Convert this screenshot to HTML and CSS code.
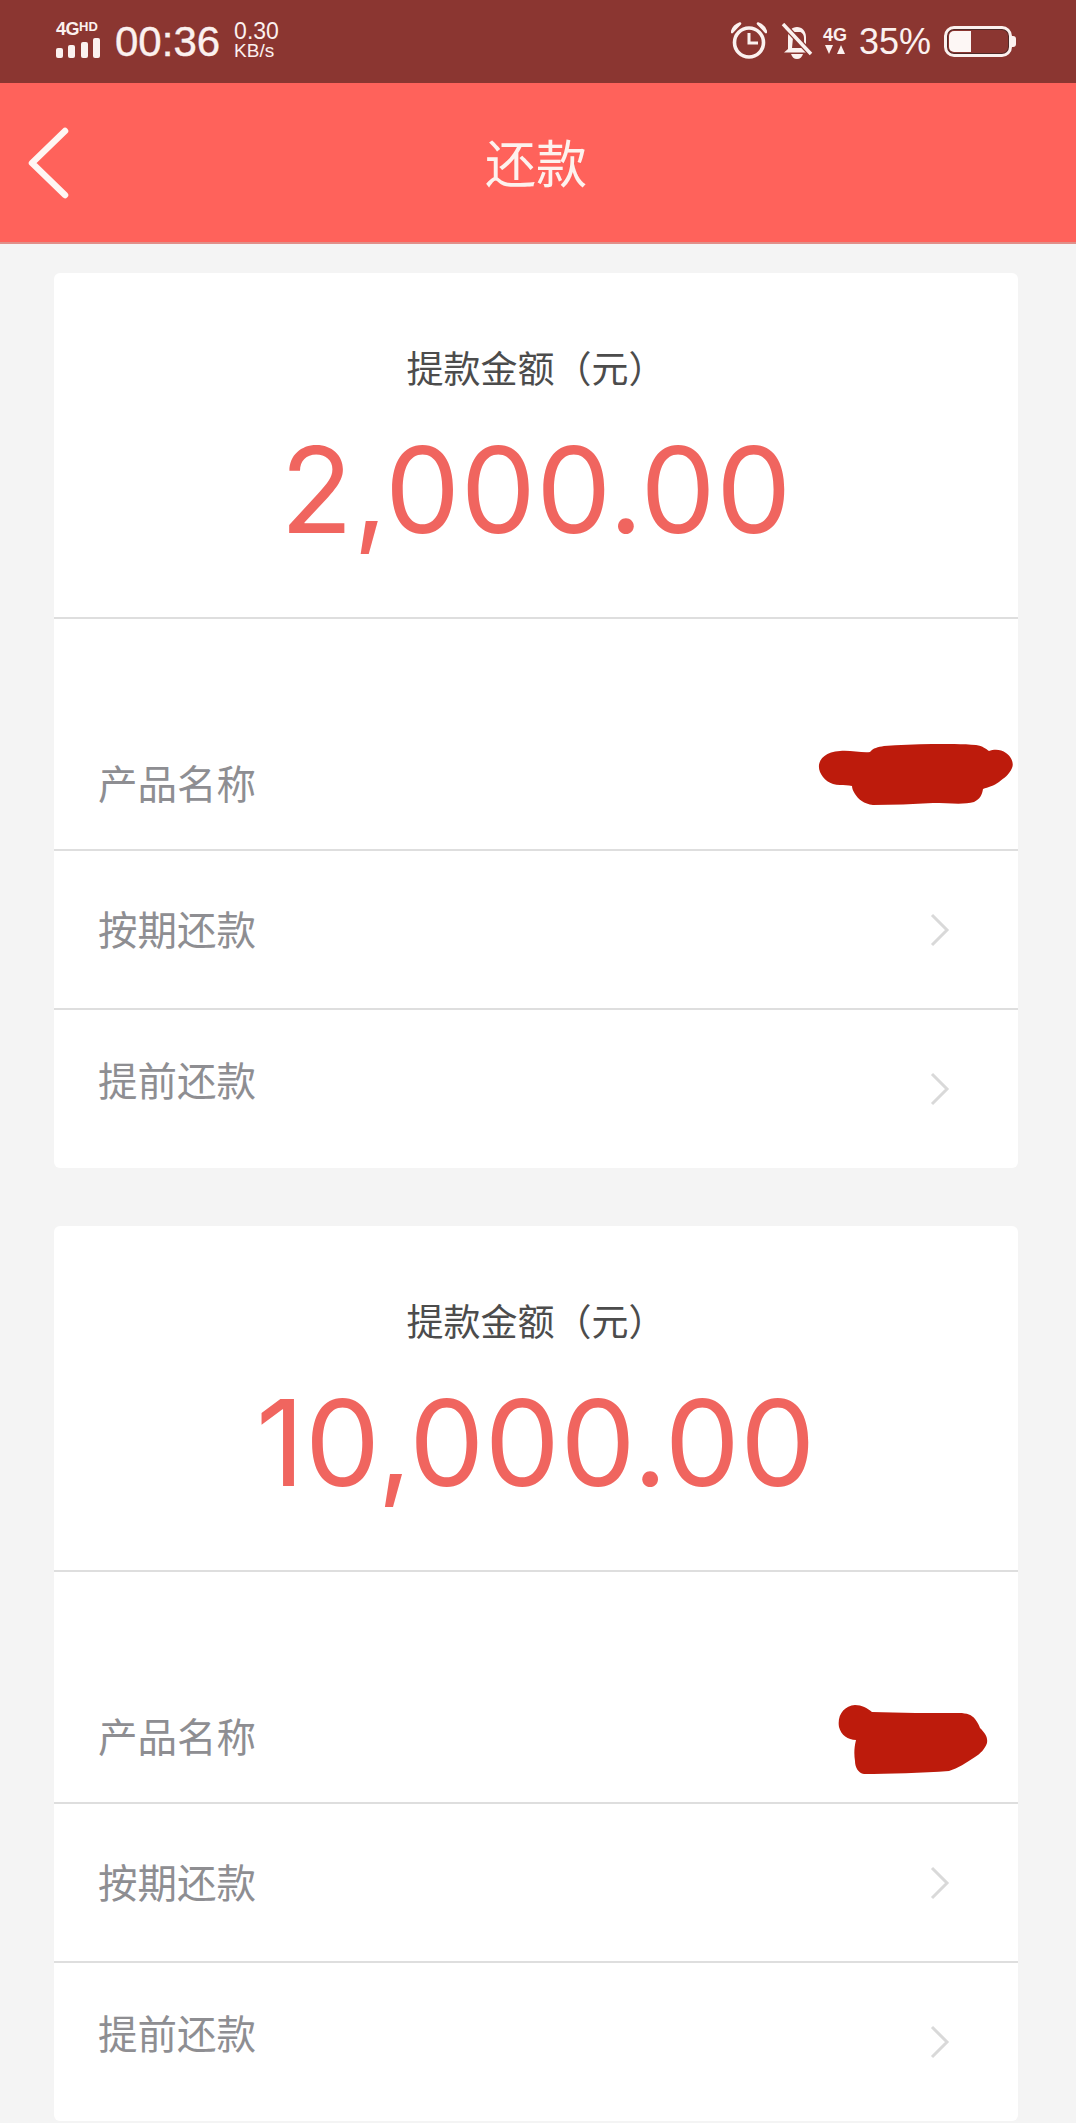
FILE: index.html
```html
<!DOCTYPE html>
<html lang="zh-CN">
  <head>
    <meta charset="UTF-8" />
    <meta name="viewport" content="width=device-width, initial-scale=1.0" />
    <title>还款</title>
    <link rel="stylesheet" href="styles.css">
  </head>
  <body>
    <div class="statusbar">
      <div class="status-left">
        <div class="signal">
          <div class="net"><span class="net-4g">4G</span><span class="net-hd">HD</span></div>
          <div class="bars">
            <i class="bar b1"></i>
            <i class="bar b2"></i>
            <i class="bar b3"></i>
            <i class="bar b4"></i>
          </div>
        </div>
        <span class="clock">00:36</span>
        <div class="speed">
          <span class="speed-num">0.30</span>
          <span class="speed-unit">KB/s</span>
        </div>
      </div>
      <div class="status-right">
        <svg class="ico-alarm" width="36" height="37" viewBox="0 0 36 37" fill="none" stroke="#fbf1ef">
          <circle cx="18" cy="20.5" r="14.5" stroke-width="3.6" />
          <path d="M18 11v10h9" stroke-width="3" />
          <path d="M1 10c1-4 4-7 8-8.500L1 10z" stroke-width="2.6" stroke-linejoin="round" />
          <path d="M35 10c-1-4-4-7-8-8.500L35 10z" stroke-width="2.6" stroke-linejoin="round" />
        </svg>
        <svg class="ico-bell" width="32" height="36" viewBox="0 0 32 36" fill="none">
          <path d="M7 26V14C7 8 11 4 16 4s9 4 9 10v12l4 3.500H3z" fill="#fbf1ef" />
          <path d="M12.500 9h7c2 1 3.500 3 3.500 6v10H11z" fill="#8b3631" />
          <path d="M10 31c1 3 3 5 6 5s5-2 6-5z" fill="#fbf1ef" />
          <path d="M2 1l28 30" stroke="#8b3631" stroke-width="6" />
          <path d="M2 1l28 30" stroke="#fbf1ef" stroke-width="3.500" />
        </svg>
        <div class="data">
          <span class="data-4g">4G</span>
          <svg width="20" height="11" viewBox="0 0 20 11" fill="#fbf1ef">
            <path d="M0 1h8L4 10z" />
            <path d="M12 10h8L16 1z" />
          </svg>
        </div>
        <span class="batt-pct">35%</span>
        <div class="battery">
          <div class="batt-body"><div class="batt-fill"></div></div>
          <i class="batt-tip"></i>
        </div>
      </div>
    </div>

    <div class="topbar">
      <svg class="back" width="44" height="72" viewBox="0 0 44 72" fill="none">
        <path d="M38 4L5 36l33 32" stroke="#fff6f3" stroke-width="6.500" stroke-linecap="round" stroke-linejoin="round" />
      </svg>
      <h1>还款</h1>
    </div>

    <div class="list">
      <div class="card">
        <div class="card-head">
          <p class="amount-label">提款金额（元）</p>
          <p class="amount">2,000.00</p>
        </div>
        <div class="row row-name">
          <span class="row-label">产品名称</span>
          <svg class="scribble scribble-a" width="195" height="62" viewBox="0 0 195 62">
            <path d="M22 7C32 6 44 9 52 8 55 4 60 3 66 2 95 0 135-1 158 1 165 2 168 5 171 7 176 5 183 5 188 9 194 13 196 20 194 24 191 31 186 34 181 38 176 42 170 43 165 45 164 51 162 55 156 58 146 61 130 59 115 59 95 60 75 61 55 61 46 60 40 55 37 50 35 47 34 44 34 42 30 41 26 41 22 41 12 41 5 35 2 28-2 18 5 8 22 7Z" />
          </svg>
        </div>
        <div class="row">
          <span class="row-label">按期还款</span>
          <svg class="chev" width="20" height="34" viewBox="0 0 20 34" fill="none">
            <path d="M2 2l15 15L2 32" />
          </svg>
        </div>
        <div class="row row-last">
          <span class="row-label">提前还款</span>
          <svg class="chev" width="20" height="34" viewBox="0 0 20 34" fill="none">
            <path d="M2 2l15 15L2 32" />
          </svg>
        </div>
      </div>

      <div class="card">
        <div class="card-head">
          <p class="amount-label">提款金额（元）</p>
          <p class="amount">10,000.00</p>
        </div>
        <div class="row row-name">
          <span class="row-label">产品名称</span>
          <svg class="scribble scribble-b" width="150" height="71" viewBox="0 0 150 71">
            <path d="M17 0C24 0 29 3 34 7 60 8 95 8 121 8 129 8 134 10 137 14 140 18 141 20 142 23 147 28 150 32 149 38 147 44 142 49 137 52 128 58 120 63 111 66 85 68 50 69 26 69 20 68 17 62 17 56 16 50 16 43 18 35 10 35 3 30 1 22-1 10 6 1 17 0Z" />
          </svg>
        </div>
        <div class="row">
          <span class="row-label">按期还款</span>
          <svg class="chev" width="20" height="34" viewBox="0 0 20 34" fill="none">
            <path d="M2 2l15 15L2 32" />
          </svg>
        </div>
        <div class="row row-last">
          <span class="row-label">提前还款</span>
          <svg class="chev" width="20" height="34" viewBox="0 0 20 34" fill="none">
            <path d="M2 2l15 15L2 32" />
          </svg>
        </div>
      </div>
    </div>
  </body>
</html>
```

FILE: styles.css
```css
* {
  box-sizing: border-box;
}

html,
body {
  height: 100%;
}

body {
  margin: 0;
  background-color: #f4f4f4;
  font-family: "Liberation Sans", "Noto Sans CJK SC", sans-serif;
  overflow: hidden;
}

p,
h1 {
  margin: 0;
  font-weight: normal;
}

/* status bar */
.statusbar {
  height: 83px;
  background-color: #8b3631;
  color: #fbf1ef;
  display: flex;
  justify-content: space-between;
  align-items: center;
  padding: 0 60px 0 56px;
}

.status-left,
.status-right {
  display: flex;
  align-items: center;
}

.signal {
  width: 44px;
  margin-right: 15px;
  margin-top: -5px;
}

.net {
  display: flex;
  align-items: flex-start;
  height: 16px;
  font-weight: bold;
  line-height: 16px;
}

.net-4g {
  font-size: 18px;
  letter-spacing: -0.5px;
}

.net-hd {
  font-size: 13px;
  line-height: 12px;
}

.bars {
  display: flex;
  justify-content: space-between;
  align-items: flex-end;
  height: 20px;
  margin-top: 1px;
}

.bar {
  width: 7px;
  background-color: #fbf1ef;
  border-radius: 2px;
}

.b1 { height: 10px; }
.b2 { height: 13px; }
.b3 { height: 16px; }
.b4 { height: 20px; }

.clock {
  font-size: 42px;
  line-height: 48px;
  -webkit-text-stroke: 0.4px #fbf1ef;
}

.speed {
  display: flex;
  flex-direction: column;
  margin-left: 14px;
  margin-top: -3px;
}

.speed-num {
  font-size: 23px;
  line-height: 21px;
}

.speed-unit {
  font-size: 19px;
  line-height: 18px;
}

.ico-alarm {
  margin-right: 14px;
  margin-top: -3px;
}

.ico-bell {
  margin-right: 10px;
  margin-top: -1px;
}

.data {
  width: 24px;
  display: flex;
  flex-direction: column;
  align-items: center;
  margin-right: 12px;
  margin-top: -2px;
}

.data-4g {
  font-size: 18px;
  line-height: 17px;
  font-weight: bold;
}

.batt-pct {
  font-size: 36px;
  line-height: 42px;
  margin-right: 13px;
}

.battery {
  display: flex;
  align-items: center;
}

.batt-body {
  width: 68px;
  height: 31px;
  border: 3px solid #fbf1ef;
  border-radius: 10px;
  padding: 2px;
  box-shadow: inset 0 0 0 1px #4d2a28;
}

.batt-fill {
  width: 22px;
  height: 100%;
  background-color: #fdf7f5;
  border-radius: 5px 0 0 5px;
}

.batt-tip {
  width: 4px;
  height: 11px;
  background-color: #fbf1ef;
  border-radius: 0 3px 3px 0;
}

/* title bar */
.topbar {
  position: relative;
  height: 161px;
  background-color: #ff625b;
  border-bottom: 2px solid #e0908a;
  display: flex;
  justify-content: center;
  align-items: center;
}

.topbar h1 {
  font-size: 51px;
  color: #fdf2ee;
  line-height: 60px;
  margin-top: 6px;
  margin-right: 4px;
}

.back {
  position: absolute;
  left: 27px;
  top: 44px;
}

/* cards */
.list {
  display: flex;
  flex-direction: column;
  gap: 58px;
  padding: 29px 58px 0 54px;
}

.card {
  background-color: #fff;
  border-radius: 6px;
  height: 895px;
  display: flex;
  flex-direction: column;
}

.card-head {
  height: 346px;
  border-bottom: 2px solid #dedede;
  text-align: center;
  padding-top: 73px;
}

.amount-label {
  font-size: 37px;
  line-height: 50px;
  color: #4c4c4c;
  text-spacing-trim: space-all;
}

.amount {
  margin-top: 24px;
  font-family: Inter, "Liberation Sans", sans-serif;
  font-size: 119px;
  line-height: 140px;
  letter-spacing: 0.5px;
  color: #f0655f;
}

.row {
  position: relative;
  height: 159px;
  border-bottom: 2px solid #dedede;
  display: flex;
  justify-content: space-between;
  align-items: center;
  padding: 0 68px 0 44px;
}

.row .row-label {
  margin-top: 3px;
}

.row-name {
  height: 232px;
  align-items: flex-end;
  padding-bottom: 40px;
}

.row-last {
  flex: 1;
  border-bottom: 0;
}

.row-last .row-label {
  margin-top: -14px;
}

.row-label {
  font-size: 39.5px;
  line-height: 48px;
  color: #8e8e92;
}

.chev path {
  stroke: #d9d9d9;
  stroke-width: 3;
}

.scribble {
  position: absolute;
  fill: #bd1b0c;
  filter: blur(0.6px);
}

.scribble-a {
  right: 5px;
  top: 125px;
}

.scribble-b {
  right: 30px;
  top: 133px;
}
```
